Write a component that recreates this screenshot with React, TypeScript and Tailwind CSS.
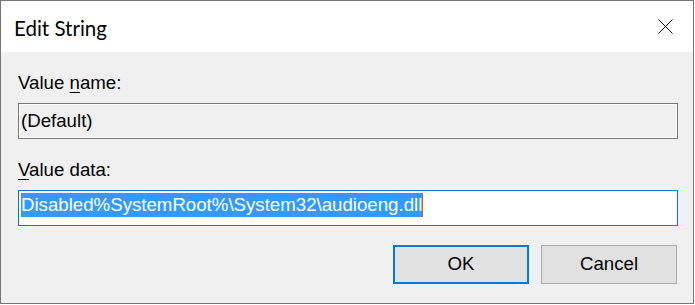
export default function App() {
  return (
    <div className="w-[695px] h-[305px] bg-white">
      <div className="w-[694px] h-[304px] border border-[#767676] flex flex-col">
        {/* Title bar */}
        <div className="h-[51px] bg-white flex items-center justify-between pl-[13px] pr-[20px]">
          <span
            className="text-[20.5px] leading-[25px] mt-[3px] text-black"
            style={{ fontFamily: 'Lato, "Noto Sans", sans-serif' }}
          >
            Edit String
          </span>
          <svg width="15" height="15" viewBox="0 0 15 15" className="block">
            <path d="M0.5 0.5 L14.5 14.5 M14.5 0.5 L0.5 14.5" stroke="#000" strokeWidth="1" fill="none" />
          </svg>
        </div>

        {/* Body */}
        <div
          className="flex-1 bg-[#f0f0f0] pl-[17px] pr-[15px] pt-[20px] flex flex-col text-[18.67px] text-black"
          style={{ fontFamily: '"Liberation Sans", Arial, sans-serif' }}
        >
          <div className="leading-[21px]">
            Value <u className="underline decoration-1 underline-offset-[3px]">n</u>ame:
          </div>
          <div className="mt-[10px] h-[36px] border border-[#7a7a7a] bg-[#f0f0f0] shadow-[inset_0_0_0_1px_#ffffff] px-[2px] flex items-center leading-[24px]">
            (Default)
          </div>

          <div className="mt-[20px] leading-[21px]">
            <u className="underline decoration-1 underline-offset-[3px]">V</u>alue data:
          </div>
          <div className="mt-[10px] h-[36px] border border-[#0078d7] bg-white px-[2px] pt-[2px] flex items-start">
            <span className="inline-flex h-[24px] leading-[24px] bg-[#3399ff] text-white whitespace-nowrap">
              Disabled%SystemRoot%\System32\audioeng.dll
              <span className="inline-block w-[1px] h-[24px] bg-[#cc6600]" />
            </span>
          </div>

          <div className="mt-[19px] flex justify-end gap-[12px] pr-[1px]">
            <button className="w-[136px] h-[39px] bg-[#e1e1e1] border-2 border-[#0078d7] leading-none">
              OK
            </button>
            <button className="w-[136px] h-[39px] bg-[#e1e1e1] border border-[#adadad] leading-none">
              Cancel
            </button>
          </div>
        </div>
      </div>
    </div>
  );
}
